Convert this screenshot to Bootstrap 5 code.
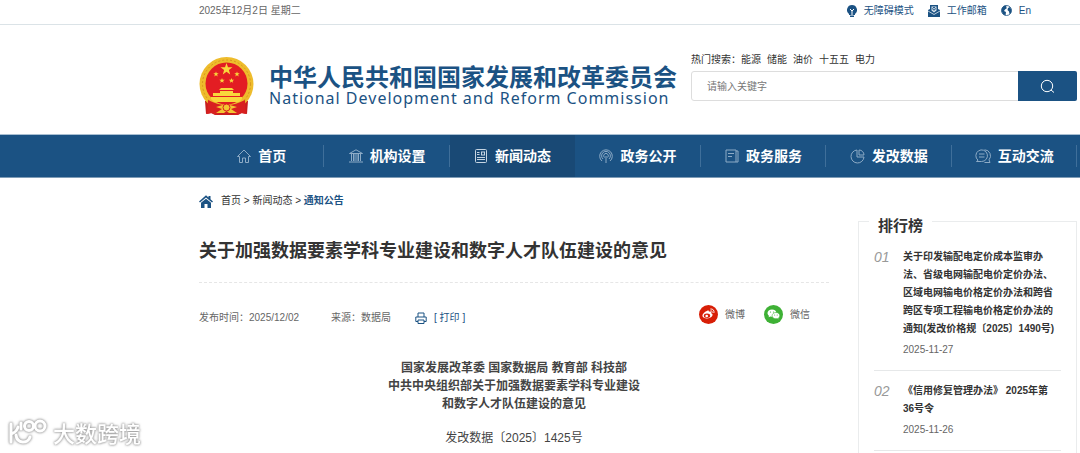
<!DOCTYPE html>
<html lang="zh-CN">
<head>
<meta charset="utf-8">
<meta name="viewport" content="width=device-width, initial-scale=1">
<title>关于加强数据要素学科专业建设和数字人才队伍建设的意见</title>
<link rel="stylesheet" href="https://cdn.jsdelivr.net/npm/bootstrap@5.3.0/dist/css/bootstrap.min.css">
<style>
:root { --brand: #1b5283; --brand-dark: #194975; }
body { font-family: "Liberation Sans", "Noto Sans CJK SC", sans-serif; font-size: 10px; line-height: 18px; color: #444; background: #fff; }
a { color: inherit; text-decoration: none; }
svg { flex: none; display: block; }
.site-wrap { padding-left: 199px; padding-right: 3px; }
.topbar { border-bottom: 1px solid #dbe3e7; height: 25px; padding-bottom: 3px; color: #666; }
.topbar ul { color: var(--brand); gap: 14px; margin-right: 46px; }
.topbar a, .site-nav a, .share a, .print-btn { gap: 7px; }
.site-header { padding-top: 25px; padding-bottom: 18px; }
.brand-block { gap: 15px; color: var(--brand); padding-top: 6px; }
.brand-cn { font-family: "Noto Sans CJK SC", sans-serif; font-weight: 700; font-size: 24px; line-height: 24px; }
.brand-en { font-family: "Noto Sans", sans-serif; font-size: 16px; line-height: 20px; letter-spacing: 1px; }
.search-area { margin-left: 14px; padding-top: 1px; }
.hot-words { gap: 6px; margin-bottom: 2px; color: #333; }
.search-area .form-control { font-size: 10px; height: 30px; padding: 0 15px; border-color: #ddd; border-radius: 3px; }
.search-area .form-control::placeholder { color: #777; }
.search-btn { width: 59px; background: var(--brand); border-radius: 0 2px 2px 0; }
.site-nav { background: var(--brand); border-top: 1px solid #a9bfd2; border-bottom: 1px solid #7f9cb6; }
.site-nav li { flex: 1 1 0; height: 42px; position: relative; }
.site-nav li::after { content: ""; position: absolute; right: 0; top: 10px; height: 22px; border-right: 1px solid #3f6f9a; }
.site-nav li.current { background: var(--brand-dark); }
.site-nav li.current::after { display: none; }
.site-nav a { height: 100%; color: #fff; font-size: 14px; font-weight: 700; }
.site-nav svg { stroke: #8dabc6; fill: none; }
.site-nav li.current svg { stroke: #c5d4e2; }
.crumbs { padding-top: 14px; gap: 8px; color: #333; }
.crumbs b, .print-btn { color: var(--brand); }
.article-title { font-size: 18px; line-height: 28px; font-weight: 700; color: #333; padding: 27px 0 17px; margin: 0; border-bottom: 1px dashed #e6e6e6; }
.article-col { width: 630px; }
.meta-row { margin-top: 22px; color: #666; }
.meta-info { gap: 32px; padding-top: 4px; }
.meta-info .print-btn { margin-left: -8px; font-size: 10px; line-height: 18px; }
.share { gap: 19px; margin-right: 19px; }
.doc-body { font-size: 12px; margin-top: 32px; }
.doc-body p { margin: 0 0 16px; }
.rank-col { margin: 15px 0 0 29px; border: solid #eaeced; border-width: 1px 1px 0; padding: 0 15px; }
.rank-title { font-size: 15px; line-height: 18px; font-weight: 700; color: #333; background: #fff; padding: 0 9px; margin: -5px 0 13px -5px; width: fit-content; }
.rank-list li { display: flex; border-bottom: 1px solid #e6e8e9; padding-bottom: 11px; margin-bottom: 11px; }
.rank-num { width: 29px; flex: none; font-size: 14px; line-height: 18px; font-style: italic; color: #999; }
.rank-text { padding-right: 5px; }
.rank-text a { color: #333; font-weight: 700; display: block; margin-bottom: 3px; }
.rank-text time { color: #666; display: block; }
.watermark { position: fixed; left: 8px; bottom: 7px; gap: 5px; color: #fff; font-size: 22px; line-height: 28px; font-weight: 500; font-family: "Noto Sans CJK SC", sans-serif; filter: drop-shadow(0 0 1px #999) drop-shadow(0 0 1px #bbb); }
</style>
</head>
<body class="d-flex flex-column min-vh-100">
<div class="topbar site-wrap d-flex align-items-center justify-content-between">
  <span>2025年12月2日 星期二</span>
  <ul class="list-unstyled d-flex mb-0">
    <li><a href="#" class="d-flex align-items-center"><svg width="10" height="12" viewBox="0 0 10 12"><path fill="#1b5283" d="M5 0a5 5 0 0 0-3 9v1h6V9a5 5 0 0 0-3-9zM3 10.500h4V12H3z"/><path d="M3 4l2 2 2-2M5 6v4" stroke="#fff" fill="none"/></svg>无障碍模式</a></li>
    <li><a href="#" class="d-flex align-items-center"><svg width="12" height="12" viewBox="0 0 12 12"><path fill="#1b5283" d="M2 0h8v4l2 1v7H0V5l2-1z"/><path d="M3.500 1.500h5v4L6 7.500l-2.500-2z" fill="#d9e4ee"/><circle cx="6" cy="3.700" r="1.300" fill="none" stroke="#1b5283"/><path d="M0 6l6 3.500L12 6" fill="none" stroke="#fff" stroke-width=".7"/></svg>工作邮箱</a></li>
    <li><a href="#" class="d-flex align-items-center"><svg width="11" height="11" viewBox="0 0 11 11"><circle cx="5.500" cy="5.500" r="5" fill="#fff" stroke="#1b5283" stroke-width=".8"/><path fill="#1b5283" d="M1 3l2-2.300L6 .5 5 2l1 1-2 1.500L3 6l2 1-.5 3.500L2 9 .5 6zM7 3l2-1 1.500 3L10 8 8.500 9 8 6.500 6.500 5z"/></svg>En</a></li>
  </ul>
</div>
<header class="site-header site-wrap d-flex">
  <a href="#" class="brand-block d-flex align-items-center">
    <svg width="55" height="60" viewBox="0 0 55 60">
      <path d="M6 45l6-2h31l6 2-1 13-5-1-4 2H16l-4-2-5 1z" fill="#c81e1e"/>
      <circle cx="27.500" cy="28" r="27" fill="#eebc2c"/>
      <circle cx="27.500" cy="28" r="24" fill="none" stroke="#d9961d" stroke-width="1" stroke-dasharray="2 2"/>
      <circle cx="27.500" cy="27.500" r="21" fill="#e31d23"/>
      <g fill="#f9d63c"><path d="M27.500 7l1.500 4.300h4.500l-3.600 2.700 1.300 4.400-3.700-2.700-3.700 2.700 1.300-4.400-3.600-2.700H26z"/>
      <path d="M17 15.500l.7 1.800h2l-1.600 1.200.6 2-1.700-1.200-1.700 1.200.6-2-1.600-1.200h2zM38 15.500l.7 1.800h2l-1.600 1.200.6 2-1.700-1.200-1.700 1.200.6-2-1.600-1.200h2zM23 22l.7 1.700h2l-1.600 1.200.6 1.900-1.700-1.100-1.700 1.100.6-1.900-1.600-1.200h2zM32.500 22l.7 1.700h2l-1.600 1.200.6 1.900-1.700-1.100-1.700 1.100.6-1.900-1.600-1.200h2z"/>
      <path d="M22 32h11l2 2H20zM21 35h13v2h7v3H14v-3h7zM12 41h31v2l-3 3H15l-3-3z"/></g>
      <path d="M9 44c6 3 12 5 18.500 5S40 47 46 44l1 14-5-1-4 2-5-3-5.500 1-5.500-1-5 3-4-2-5 1z" fill="#d82020"/>
      <path d="M17 51l10-3 11 3-6 2 6 4h-8l-2.500-2-2.500 2h-8l6-4z" fill="#f3c632"/>
      <circle cx="27.500" cy="51.500" r="3.500" fill="#f3c632" stroke="#d82020"/>
    </svg>
    <span>
      <span class="brand-cn d-block">中华人民共和国国家发展和改革委员会</span>
      <span class="brand-en d-block">National Development and Reform Commission</span>
    </span>
  </a>
  <form class="search-area flex-grow-1">
    <div class="hot-words d-flex"><span>热门搜索：<a href="#">能源</a></span><a href="#">储能</a><a href="#">油价</a><a href="#">十五五</a><a href="#">电力</a></div>
    <div class="input-group">
      <input class="form-control" type="search" placeholder="请输入关键字" aria-label="请输入关键字">
      <button class="search-btn btn border-0 p-0 d-flex align-items-center justify-content-center" type="button" aria-label="搜索"><svg width="15" height="15" viewBox="0 0 15 15" fill="none" stroke="#fff"><circle cx="7" cy="7" r="5.700"/><path d="M11 11l3 2.500"/></svg></button>
    </div>
  </form>
</header>
<nav class="site-nav site-wrap">
  <ul class="list-unstyled d-flex mb-0">
    <li><a href="#" class="d-flex align-items-center justify-content-center"><svg width="14" height="14" viewBox="0 0 14 14"><path d="M.5 7.500L7 1l6.500 6.500h-2v6h-3V9h-3v4.500h-3v-6z"/></svg>首页</a></li>
    <li><a href="#" class="d-flex align-items-center justify-content-center"><svg width="14" height="14" viewBox="0 0 14 14"><path d="M.5 4.500L7 .8l6.500 3.700zM2.500 5v7M4.500 5v7M6 5v7M8 5v7M9.500 5v7M11.500 5v7M0 13h14"/></svg>机构设置</a></li>
    <li class="current"><a href="#" class="d-flex align-items-center justify-content-center"><svg width="14" height="14" viewBox="0 0 14 14"><rect x="1.500" y=".5" width="11" height="13" rx="1"/><path d="M3 3.500h2.500M3 5.500h2.500M3 8.500h8M3 10.500h8"/><rect x="7.500" y="3" width="3" height="3"/></svg>新闻动态</a></li>
    <li><a href="#" class="d-flex align-items-center justify-content-center"><svg width="14" height="14" viewBox="0 0 14 14"><path d="M3 12a6.300 6.300 0 1 1 8 0M4 10a4.400 4.400 0 1 1 6 0M5.500 8.500a2.300 2.300 0 1 1 3 0M7 7v7"/></svg>政务公开</a></li>
    <li><a href="#" class="d-flex align-items-center justify-content-center"><svg width="14" height="14" viewBox="0 0 14 14"><path d="M1 1h10v12H1zM11 2h2v11h-2M3 4.500h6M3 7.500h4"/></svg>政务服务</a></li>
    <li><a href="#" class="d-flex align-items-center justify-content-center"><svg width="15" height="15" viewBox="0 0 15 15"><path d="M7 1a6.500 6.500 0 1 0 7 7H7zM9 1v5h5A5 5 0 0 0 9 1z"/></svg>发改数据</a></li>
    <li><a href="#" class="d-flex align-items-center justify-content-center"><svg width="16" height="14" viewBox="0 0 16 14"><path d="M3 11.200A5.800 5.800 0 1 1 6.500 12.500H1.500zM4 5h5.500M4 8h5.500M9.500.8a6 6 0 0 1 4.500 10l1 2.700H9.500"/></svg>互动交流</a></li>
  </ul>
</nav>
<main class="site-wrap d-flex flex-grow-1">
  <article class="article-col flex-shrink-0">
    <div class="crumbs d-flex align-items-center"><svg width="14" height="13" viewBox="0 0 14 13" fill="#1b5283"><path d="M0 6.500L7 .3l2.500 2.200V1h2v3.300L14 6.500l-1 1-6-5-6 5zM2 7.700l5-4 5 4V13H8.500V9h-3v4H2z"/></svg><span><a href="#">首页</a> &gt; <a href="#">新闻动态</a> &gt; <b>通知公告</b></span></div>
    <h1 class="article-title">关于加强数据要素学科专业建设和数字人才队伍建设的意见</h1>
    <div class="meta-row d-flex justify-content-between align-items-start">
      <div class="meta-info d-flex"><span>发布时间：2025/12/02</span><span>来源：数据局</span>
        <button type="button" class="print-btn btn p-0 border-0 d-flex align-items-center"><svg width="12" height="12" viewBox="0 0 12 12" fill="none" stroke="#1b5283"><path d="M3 5V1h6v4M3 9.500H.8V5h10.400v4.500H9M3 8h6v3.500H3z"/></svg>[ 打印 ]</button></div>
      <div class="share d-flex">
        <a href="#" class="d-flex align-items-center"><svg width="19" height="19" viewBox="0 0 19 19"><circle cx="9.500" cy="9.500" r="9.500" fill="#d81e06"/><path d="M8 6c1-.7 2.200-.5 1.900.8 1.500-.5 2.800 0 2.300 1.400 1.300.5 1.800 1.500 1 2.700-1.600 3-8.300 3.400-9.600.5C2.800 9.500 5.800 6.500 8 6z" fill="#fff"/><ellipse cx="8" cy="10.800" rx="3.200" ry="2.200" fill="#d81e06"/><circle cx="7.700" cy="11" r="1.300" fill="#fff"/><path d="M11.500 5.800c1.300-.2 2 .7 1.700 1.900M11.300 4c2.700-.4 4.200 1.500 3.600 4" fill="none" stroke="#fff" stroke-width=".9"/></svg>微博</a>
        <a href="#" class="d-flex align-items-center"><svg width="19" height="19" viewBox="0 0 19 19"><circle cx="9.500" cy="9.500" r="9.500" fill="#3eb135"/><path d="M8 4.500c-2.600 0-4.500 1.600-4.500 3.600 0 1.100.6 2 1.500 2.700l-.4 1.400 1.700-.8 1.700.3c2.600 0 4.500-1.600 4.500-3.600S10.600 4.500 8 4.500z" fill="#fff"/><path d="M12 7.500c-2.200 0-3.900 1.400-3.900 3.200s1.700 3.100 3.900 3.100l1.300-.2 1.400.8-.3-1.300c.9-.6 1.400-1.400 1.400-2.400 0-1.800-1.600-3.200-3.800-3.200z" fill="#fff" stroke="#3eb135" stroke-width=".6"/><g fill="#3eb135"><circle cx="6.500" cy="7" r=".6"/><circle cx="9.500" cy="7" r=".6"/><circle cx="10.700" cy="10" r=".5"/><circle cx="13.200" cy="10" r=".5"/></g></svg>微信</a>
      </div>
    </div>
    <div class="doc-body text-center">
      <p><b>国家发展改革委 国家数据局 教育部 科技部<br>中共中央组织部关于加强数据要素学科专业建设<br>和数字人才队伍建设的意见</b></p>
      <p class="mb-0">发改数据〔2025〕1425号</p>
    </div>
  </article>
  <aside class="flex-grow-1 d-flex flex-column pt-4 mt-1">
    <div class="rank-col flex-grow-1">
      <h2 class="rank-title">排行榜</h2>
      <ol class="rank-list list-unstyled mb-0">
        <li><span class="rank-num">01</span><div class="rank-text"><a href="#">关于印发输配电定价成本监审办法、省级电网输配电价定价办法、区域电网输电价格定价办法和跨省跨区专项工程输电价格定价办法的通知(发改价格规〔2025〕1490号)</a><time datetime="2025-11-27">2025-11-27</time></div></li>
        <li class="mb-0"><span class="rank-num">02</span><div class="rank-text"><a href="#">《信用修复管理办法》 2025年第36号令</a><time datetime="2025-11-26">2025-11-26</time></div></li>
      </ol>
    </div>
  </aside>
</main>
<div class="watermark d-flex align-items-center">
  <svg width="40" height="28" viewBox="0 0 40 28" fill="none" stroke="#fff" stroke-width="3" stroke-linecap="round"><path d="M3 6v18M3 16c3-1 6-3 7-7M8 17c1 9 12 9 14 2"/><circle cx="21" cy="8" r="4.500"/><circle cx="32" cy="8" r="5"/><path d="M13 5v6"/></svg>
  <span>大数跨境</span>
</div>
<script src="https://cdn.jsdelivr.net/npm/bootstrap@5.3.0/dist/js/bootstrap.bundle.min.js"></script>
</body>
</html>
